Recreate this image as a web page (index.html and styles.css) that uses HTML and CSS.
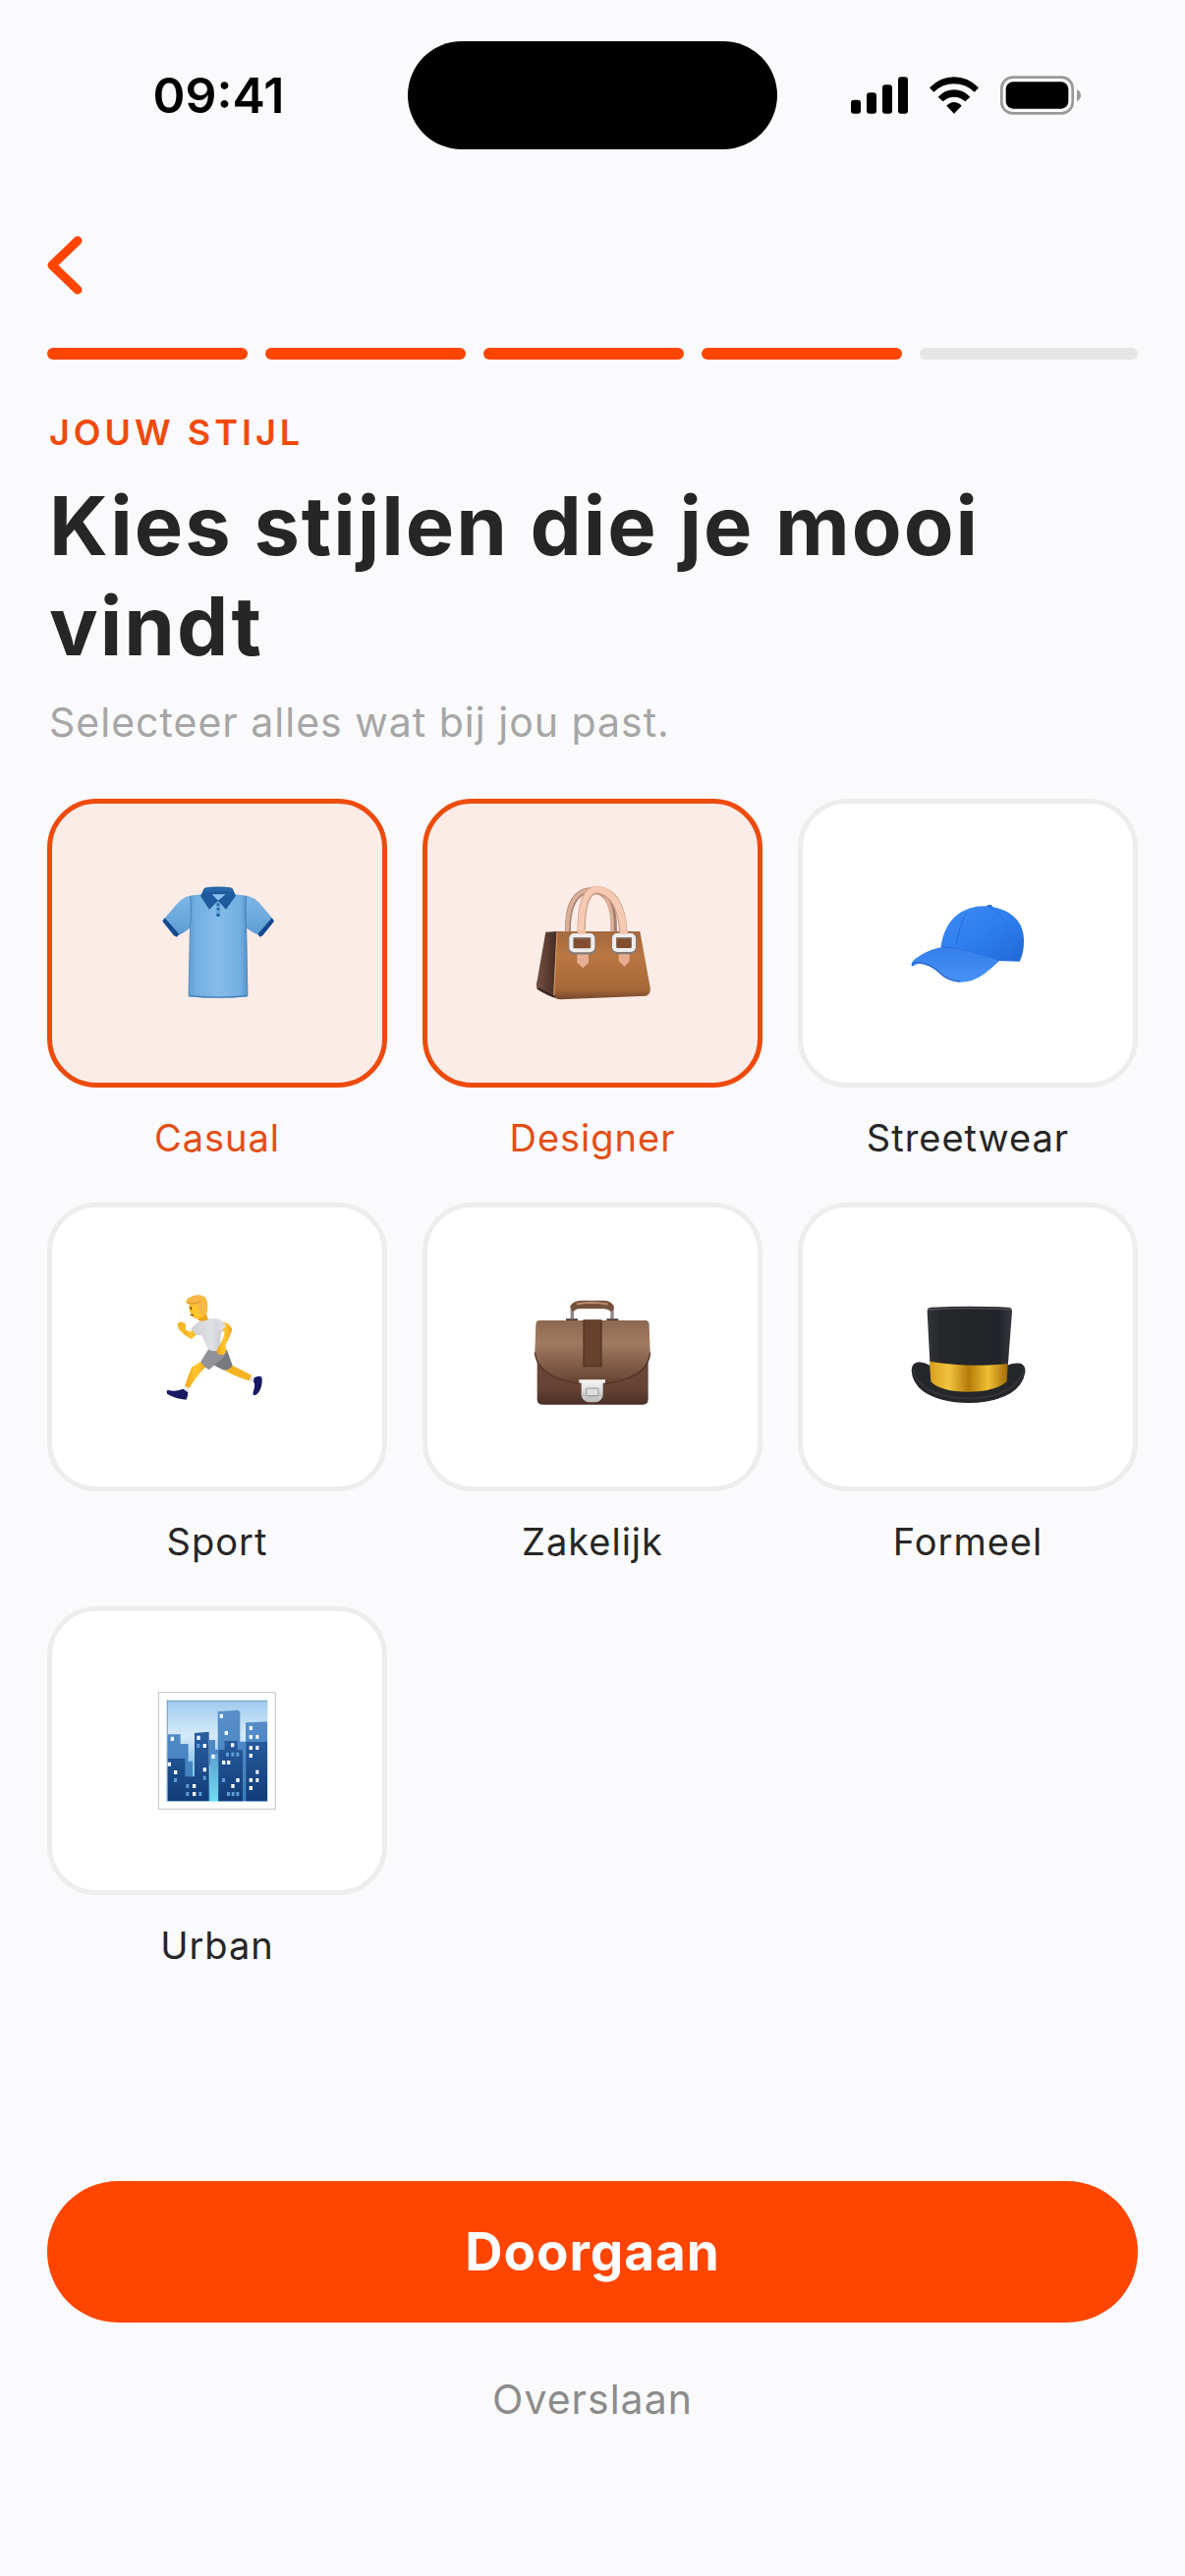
FILE: index.html
```html
<!DOCTYPE html>
<html lang="nl">
<head>
<meta charset="utf-8">
<meta name="viewport" content="width=device-width, initial-scale=1">
<title>Jouw stijl</title>
<link rel="stylesheet" href="styles.css">
</head>
<body>
<div class="screen">
  <header class="status-bar">
    <time class="status-time">09:41</time>
    <div class="island"></div>
    <div class="status-icons">
      <svg width="58" height="38" viewBox="75 85 174 114" aria-hidden="true">
        <rect x="75" y="156" width="30" height="42" rx="9"/>
        <rect x="123" y="134" width="30" height="64" rx="9"/>
        <rect x="171" y="110" width="30" height="88" rx="9"/>
        <rect x="219" y="86" width="30" height="112" rx="9"/>
      </svg>
      <svg width="50" height="38" viewBox="317 85 150 114" aria-hidden="true">
        <path d="M317 119Q349 86 392 86Q435 86 467 119L454 132Q427 107 392 107Q357 107 330 132Z"/>
        <path d="M343 147Q364 125 392 125Q420 125 441 147L426 161Q412 147 392 147Q372 147 358 161Z"/>
        <path d="M369 174Q379 163 392 163Q405 163 415 174L392 198Z"/>
      </svg>
      <svg width="82" height="40" viewBox="534 82 246 120" aria-hidden="true">
        <rect x="538" y="87" width="217" height="110" rx="34" fill="none" stroke="#999" stroke-width="8"/>
        <rect x="551" y="101" width="191" height="82" rx="22"/>
        <path d="M768 124Q780 130 780 142Q780 154 768 160Z" fill="#999"/>
      </svg>
    </div>
  </header>

  <main class="content">
    <button class="back" type="button" aria-label="Terug">
      <svg width="36" height="60" viewBox="0 0 36 60" aria-hidden="true">
        <path d="M31 5L5 30L31 55" fill="none" stroke="currentColor" stroke-width="9" stroke-linecap="round" stroke-linejoin="round"/>
      </svg>
    </button>

    <div class="progress" role="progressbar" aria-label="Voortgang" aria-valuemin="0" aria-valuemax="5" aria-valuenow="4">
      <span class="step done"></span><span class="step done"></span><span class="step done"></span><span class="step done"></span><span class="step"></span>
    </div>

    <div class="intro">
      <p class="eyebrow">JOUW STIJL</p>
      <h1 class="title">Kies stijlen die je mooi vindt</h1>
      <p class="subtitle">Selecteer alles wat bij jou past.</p>
    </div>

    <div class="styles">
      <label class="style">
        <input class="style-input" type="checkbox" name="style" value="casual" checked>
        <span class="card">
          <svg class="icon" viewBox="60 60 360 360" aria-hidden="true">
            <defs>
              <linearGradient id="shirt" x1="0" x2="1"><stop offset="0" stop-color="#5f9fd4"/><stop offset=".12" stop-color="#72aee0"/><stop offset=".5" stop-color="#85bdea"/><stop offset=".88" stop-color="#72aee0"/><stop offset="1" stop-color="#5592ca"/></linearGradient>
              <linearGradient id="sleeve" x1="0" y1="0" x2="0" y2="1"><stop offset="0" stop-color="#7db7e7"/><stop offset="1" stop-color="#5e9dd3"/></linearGradient>
            </defs>
            <path d="M158 95Q138 98 122 115L76 168L119 216Q133 214 158 193ZM328 95Q350 98 367 115L412 168L371 216Q352 212 328 193Z" fill="url(#sleeve)"/>
            <path d="M156 95L198 90H286L330 95V200L333 403Q243 412 153 403L157 200Z" fill="url(#shirt)"/>
            <path d="M153 401Q243 410 333 401" fill="none" stroke="#3f7fb9" stroke-width="4"/>
            <path d="M158 96Q163 125 157 200L153 400M329 96Q323 125 329 200L333 400" fill="none" stroke="#3975ad" stroke-width="2"/>
            <path d="M80 163L124 212L117 221L108 217L73 173ZM407 163L364 212L370 221L379 217L414 173Z" fill="#14498f"/>
            <path d="M222 88L243 108L266 88Z" fill="#8cc3ee"/>
            <path d="M236 106H250V160H236Z" fill="#69a7dc"/>
            <path d="M201 71Q243 64 286 71L297 95L267 137L243 110L216 137L189 96ZM224 91L243 110L266 91Z" fill="#1e5b9d" fill-rule="evenodd"/>
            <path d="M203 72Q243 66 284 72L290 85Q243 77 197 85Z" fill="#2768ab"/>
            <circle cx="243" cy="122" r="4" fill="#23619f"/><circle cx="243" cy="136" r="4" fill="#23619f"/><circle cx="243" cy="154" r="5" fill="#23619f"/>
          </svg>
        </span>
        <span class="name">Casual</span>
      </label>

      <label class="style">
        <input class="style-input" type="checkbox" name="style" value="designer" checked>
        <span class="card">
          <svg class="icon" viewBox="99 120 360 360" aria-hidden="true">
            <defs>
              <linearGradient id="bag" x1="0" y1="0" x2="0" y2="1"><stop offset="0" stop-color="#a4693f"/><stop offset=".35" stop-color="#b87642"/><stop offset=".85" stop-color="#a76938"/><stop offset="1" stop-color="#73452b"/></linearGradient>
              <linearGradient id="bag-side" x1="0" x2="1"><stop offset="0" stop-color="#765040"/><stop offset="1" stop-color="#422a24"/></linearGradient>
            </defs>
            <path d="M204 266Q201 142 276 138Q348 140 345 266" fill="none" stroke="#a98170" stroke-width="18"/>
            <path d="M202 266Q200 142 276 136Q343 140 339 266" fill="none" stroke="#dbb09a" stroke-width="11"/>
            <path d="M136 266L172 264V469Q140 461 110 441Q105 430 110 414Z" fill="url(#bag-side)"/>
            <path d="M169 264H424L454 430Q460 454 443 461L181 472Q164 471 160 459Z" fill="url(#bag)"/>
            <path d="M171 268L161 459" stroke="#d39c68" stroke-width="3"/>
            <path d="M113 438L163 464" fill="none" stroke="#342321" stroke-width="5"/>
            <path d="M245 272Q243 138 292 138Q368 145 373 272" fill="none" stroke="#c99a82" stroke-width="25"/>
            <path d="M244 272Q243 138 292 135Q368 145 374 272" fill="none" stroke="#f6c9b2" stroke-width="20"/>
            <path d="M232 300H267V360L250 376L232 360ZM359 300H392V355L377 371L359 355Z" fill="#e8ae92"/>
            <rect x="214" y="278" width="66" height="48" rx="9" fill="#824d2c" stroke="#857a74" stroke-width="17"/>
            <rect x="214" y="276" width="66" height="46" rx="9" fill="none" stroke="#eeeceb" stroke-width="12"/>
            <rect x="345" y="278" width="60" height="47" rx="9" fill="#824d2c" stroke="#857a74" stroke-width="17"/>
            <rect x="345" y="276" width="60" height="45" rx="9" fill="none" stroke="#eeeceb" stroke-width="12"/>
            <path d="M234 259H258V272H234ZM364 259H387V272H364Z" fill="#f3c1a8"/>
          </svg>
        </span>
        <span class="name">Designer</span>
      </label>

      <label class="style">
        <input class="style-input" type="checkbox" name="style" value="streetwear">
        <span class="card">
          <svg class="icon" viewBox="75 60 360 360" aria-hidden="true">
            <defs>
              <linearGradient id="cap" x1="0" y1="0" x2="1" y2="1"><stop offset="0" stop-color="#3f8cf2"/><stop offset=".5" stop-color="#2e7ef0"/><stop offset="1" stop-color="#2168d4"/></linearGradient>
              <linearGradient id="brim" x1="0" y1="0" x2="0" y2="1"><stop offset="0" stop-color="#347fe9"/><stop offset="1" stop-color="#4791f6"/></linearGradient>
            </defs>
            <path d="M311 130Q313 122 323 123Q332 124 331 132Z" fill="#2464ca"/>
            <path d="M172 254Q181 188 220 155Q260 125 310 127Q376 132 407 171Q428 200 426 237Q426 270 413 296L345 294Z" fill="url(#cap)"/>
            <path d="M251 146Q229 190 220 244" fill="none" stroke="#246bd8" stroke-width="3"/>
            <path d="M314 128Q363 145 381 202Q393 247 377 294" fill="none" stroke="#2a74e4" stroke-width="3"/>
            <path d="M86 311Q76 297 104 281Q135 258 182 251Q264 260 352 293Q330 315 303 335Q269 360 230 359Q193 355 171 334Q138 303 103 302Z" fill="url(#brim)"/>
            <path d="M86 309Q80 299 102 299Q140 301 171 332Q195 355 230 357" fill="none" stroke="#2a67c8" stroke-width="4"/>
            <path d="M176 251Q262 258 350 292" fill="none" stroke="#2a70dc" stroke-width="3"/>
          </svg>
        </span>
        <span class="name">Streetwear</span>
      </label>

      <label class="style">
        <input class="style-input" type="checkbox" name="style" value="sport">
        <span class="card">
          <svg class="icon" viewBox="63 63 360 360" aria-hidden="true">
            <defs>
              <linearGradient id="tee" x1="0" x2="1"><stop offset="0" stop-color="#cfd0d4"/><stop offset=".6" stop-color="#e0e1e4"/><stop offset="1" stop-color="#c3c5ca"/></linearGradient>
              <linearGradient id="skin" x1="0" x2="1"><stop offset="0" stop-color="#f0a51c"/><stop offset=".5" stop-color="#ffc72e"/><stop offset="1" stop-color="#f0a31c"/></linearGradient>
            </defs>
            <path d="M268 309L290 300Q320 314 349 330L345 347Q304 337 268 316Z" fill="#f5b323"/>
            <path d="M345 333L362 342L357 355L341 346Z" fill="#e6e7ee"/>
            <path d="M356 337Q371 329 379 335Q383 350 375 372Q367 389 357 391Q349 389 355 374Q360 358 354 348Z" fill="#171a62"/>
            <path d="M226 264L273 252L290 300Q280 314 264 314L235 300Z" fill="#77797e"/>
            <path d="M202 282L165 305Q154 330 144 364L158 370Q172 343 202 310L214 300Z" fill="url(#skin)"/>
            <path d="M143 362L160 369L154 383L138 374Z" fill="#e8e9f0"/>
            <path d="M91 374Q108 379 124 376L139 371L154 382Q153 398 148 404Q117 402 91 387Q87 380 91 374Z" fill="#171a62"/>
            <path d="M217 249L272 251Q270 272 244 290L218 313Q200 301 193 287Z" fill="#909297"/>
            <path d="M138 202L164 220L189 196L180 182L158 197L145 189Z" fill="url(#skin)"/>
            <path d="M132 196Q118 180 123 171Q130 162 137 168Q148 169 147 180Q149 196 139 200Z" fill="#f7b82a"/>
            <path d="M163 188Q184 161 207 158Q233 153 251 159L269 184L254 204L252 250Q233 262 215 250Q202 218 195 208L179 207Z" fill="url(#tee)"/>
            <path d="M262 166Q284 174 289 190Q282 214 268 238Q275 259 262 266Q245 270 241 257L245 245Q257 232 266 199L256 187Z" fill="url(#skin)"/>
            <path d="M239 159Q263 160 270 180L257 193L246 187" fill="#dcdee2"/>
            <path d="M177 148L209 141L216 158Q201 168 186 162Z" fill="#eba51f"/>
            <path d="M158 110Q154 128 162 141Q168 158 184 157Q204 153 211 135L207 107Z" fill="#ffc52e"/>
            <path d="M149 109Q145 97 158 92Q183 77 205 90Q218 100 212 140Q202 150 192 145Q188 127 184 117Q163 120 149 109Z" fill="#f6b943"/>
            <path d="M151 108Q176 114 194 104" fill="none" stroke="#dc9630" stroke-width="3"/>
            <path d="M162 121L164 128M163 145L170 146" fill="none" stroke="#673f1c" stroke-width="4" stroke-linecap="round"/>
          </svg>
        </span>
        <span class="name">Sport</span>
      </label>

      <label class="style">
        <input class="style-input" type="checkbox" name="style" value="zakelijk">
        <span class="card">
          <svg class="icon" viewBox="69 33 360 360" aria-hidden="true">
            <defs>
              <linearGradient id="case" x1="0" y1="0" x2="0" y2="1"><stop offset="0" stop-color="#6d4a39"/><stop offset=".7" stop-color="#664334"/><stop offset="1" stop-color="#4a2f26"/></linearGradient>
              <linearGradient id="flap" x1="0" y1="0" x2="0" y2="1"><stop offset="0" stop-color="#8c6850"/><stop offset=".35" stop-color="#a07b62"/><stop offset="1" stop-color="#644130"/></linearGradient>
              <linearGradient id="lock" x1="0" y1="0" x2="0" y2="1"><stop offset="0" stop-color="#f6f6f6"/><stop offset="1" stop-color="#bcbcbe"/></linearGradient>
            </defs>
            <path d="M187 126V104Q184 92 200 91M309 126V104Q311 92 298 91" fill="none" stroke="#8f8783" stroke-width="10"/>
            <path d="M191 105Q180 98 181 88Q191 72 213 71H285Q305 72 314 88Q317 100 306 105Q298 97 284 96H212Q198 96 191 105Z" fill="#76503b"/>
            <path d="M201 82Q245 73 296 82" fill="none" stroke="#b18a70" stroke-width="7"/>
            <path d="M168 127H204V136H168ZM292 127H328V136H292Z" fill="#4d352c"/>
            <path d="M80 220H419V373Q419 389 403 389H96Q80 389 80 373Z" fill="url(#case)"/>
            <path d="M88 132H411Q421 132 422 144L425 229Q421 291 341 314Q250 341 157 314Q80 291 73 229L76 144Q77 132 88 132Z" fill="url(#flap)"/>
            <path d="M73 230Q80 290 157 314Q250 341 341 314Q420 291 425 230" fill="none" stroke="#543328" stroke-width="4"/>
            <path d="M83 144L81 229Q94 281 163 304M414 144L417 229Q404 282 337 304" fill="none" stroke="#b0907b" stroke-width="1" stroke-dasharray="3 3"/>
            <path d="M220 130H278V274H220Z" fill="#553425"/>
            <path d="M224 130H274V270H224Z" fill="#65412e"/>
            <path d="M208 313H288V323H281V360Q277 381 258 382H237Q219 380 215 360V323H208Z" fill="url(#lock)"/>
            <rect x="230" y="339" width="37" height="23" rx="3" fill="#dedede" stroke="#99999b" stroke-width="3"/>
            <path d="M216 359Q249 369 281 359" fill="none" stroke="#a4a4a5" stroke-width="2"/>
          </svg>
        </span>
        <span class="name">Zakelijk</span>
      </label>

      <label class="style">
        <input class="style-input" type="checkbox" name="style" value="formeel">
        <span class="card">
          <svg class="icon" viewBox="75 33 360 360" aria-hidden="true">
            <defs>
              <linearGradient id="hat" x1="0" x2="1"><stop offset="0" stop-color="#34353a"/><stop offset=".15" stop-color="#25272b"/><stop offset=".85" stop-color="#222429"/><stop offset="1" stop-color="#37383d"/></linearGradient>
              <linearGradient id="band" x1="0" x2="1"><stop offset="0" stop-color="#d79e1b"/><stop offset=".25" stop-color="#f0c440"/><stop offset=".5" stop-color="#b47a09"/><stop offset=".75" stop-color="#efc033"/><stop offset="1" stop-color="#a36b06"/></linearGradient>
            </defs>
            <path d="M83 284Q84 260 107 259Q126 261 140 270H373Q390 260 416 263Q432 269 430 291Q424 329 386 354Q334 384 257 384Q170 384 119 349Q84 321 83 284Z" fill="#26272b"/>
            <path d="M88 284Q98 324 140 346Q196 373 270 370Q349 367 394 331Q419 309 427 284" fill="none" stroke="#38393e" stroke-width="4"/>
            <path d="M131 104Q131 92 144 92Q260 87 378 92Q391 93 390 105L374 315Q354 350 257 350Q163 350 142 316Z" fill="url(#hat)"/>
            <path d="M133 99Q260 91 388 99" fill="none" stroke="#515258" stroke-width="4"/>
            <path d="M138 257Q258 277 377 264L374 319Q338 350 257 350Q171 350 142 319Z" fill="url(#band)"/>
          </svg>
        </span>
        <span class="name">Formeel</span>
      </label>

      <label class="style">
        <input class="style-input" type="checkbox" name="style" value="urban">
        <span class="card">
          <svg class="icon" viewBox="63 66 360 360" aria-hidden="true">
            <defs>
              <linearGradient id="sky" x1="0" y1="0" x2="0" y2="1"><stop offset="0" stop-color="#9dcbed"/><stop offset=".35" stop-color="#d6ebfa"/><stop offset=".65" stop-color="#8bc4e8"/><stop offset="1" stop-color="#57c8e8"/></linearGradient>
              <linearGradient id="tower" x1="0" y1="0" x2="0" y2="1"><stop offset="0" stop-color="#2a5fa2"/><stop offset="1" stop-color="#123c78"/></linearGradient>
              <linearGradient id="far" x1="0" y1="0" x2="0" y2="1"><stop offset="0" stop-color="#5a8fcb"/><stop offset="1" stop-color="#397ebc"/></linearGradient>
              <linearGradient id="gap" x1="0" y1="0" x2="0" y2="1"><stop offset="0" stop-color="#5d9fd0"/><stop offset="1" stop-color="#6fdcf0"/></linearGradient>
            </defs>
            <rect x="64" y="68" width="357" height="356" fill="#fff" stroke="#c3c3c3" stroke-width="3"/>
            <rect x="89" y="92" width="308" height="308" fill="url(#sky)"/>
            <path d="M91 196H131V225H155V278H168V330H91ZM219 213H237V242H245V126L306 122L313 126V218H330V160L396 157V400H247V290H219Z" fill="url(#far)"/>
            <path d="M91 270H145V325H174V192L218 188V400H91ZM247 243H266V216H305V244H321V400H247ZM331 219H396V400H331Z" fill="url(#tower)"/>
            <path d="M222 255H246V400H222Z" fill="url(#gap)"/>
            <path d="M91 94H396M91 92V398" stroke="#7aa3b5" stroke-width="3"/>
            <path d="M101 203h10v13h-10zM181 200h10v13h-10zM200 225h10v12h-10zM251 134h10v12h-10zM266 186h10v12h-10zM285 223h10v12h-10zM226 258h10v12h-10zM92 281h10v12h-10zM111 306h10v12h-10zM200 298h10v12h-10zM168 348h10v12h-10zM168 372h10v12h-10zM258 276h10v12h-10zM273 276h10v12h-10zM301 330h10v12h-10zM286 348h10v12h-10zM341 171h10v12h-10zM341 198h10v12h-10zM361 198h9v12h-9zM341 231h10v12h-10zM361 231h9v12h-9zM341 255h10v12h-10zM361 305h9v12h-9zM361 330h9v12h-9zM341 330h10v12h-10zM341 354h10v12h-10z" fill="#f3fbff"/>
            <path d="M181 225h9v12h-9zM200 323h9v12h-9zM148 348h9v12h-9zM148 372h9v12h-9zM187 372h9v12h-9zM111 330h9v12h-9zM258 330h9v12h-9zM270 251h9v12h-9zM286 251h9v12h-9zM301 251h9v12h-9zM273 372h9v12h-9zM287 372h9v12h-9zM301 372h9v12h-9z" fill="#5b9dd7"/>
          </svg>
        </span>
        <span class="name">Urban</span>
      </label>
    </div>
  </main>

  <footer class="actions">
    <button class="primary" type="button">Doorgaan</button>
    <button class="skip" type="button">Overslaan</button>
  </footer>
</div>
</body>
</html>
```
FILE: styles.css
```css
* {
  box-sizing: border-box;
}

body {
  margin: 0;
  background: #fafafc;
  color: #262626;
  font-family: Inter, "Liberation Sans", sans-serif;
}

button {
  padding: 0;
  border: 0;
  background: none;
  font: inherit;
  letter-spacing: inherit;
  cursor: pointer;
}

svg {
  display: block;
  overflow: visible;
}

.screen {
  display: flex;
  flex-direction: column;
  min-height: 100vh;
}

.status-bar {
  display: grid;
  grid-template-columns: 1fr 376px 1fr;
  align-items: center;
  padding-top: 42px;
  color: #000;
}

.status-time {
  padding-left: 30px;
  font-size: 50px;
  font-weight: 600;
  line-height: 60px;
  text-align: center;
}

.island {
  height: 110px;
  border-radius: 55px;
  background: #000;
}

.status-icons {
  display: flex;
  align-items: center;
  justify-content: center;
  gap: 22px;
  padding-right: 32px;
}

.content {
  display: flex;
  flex-direction: column;
  padding: 88px 48px 0;
}

.back {
  align-self: flex-start;
  color: #ff4500;
}

.progress {
  display: grid;
  grid-template-columns: repeat(5, 1fr);
  margin-top: 54px;
}

.step {
  height: 12px;
  margin-right: 18px;
  border-radius: 6px;
  background: #e6e6e6;
}

.step:last-child {
  margin-right: 0;
}

.step.done {
  background: #ff4500;
}

.intro {
  padding: 50px 2px 0;
}

.eyebrow {
  margin: 0;
  color: #f04a0c;
  font-size: 36px;
  font-weight: 600;
  line-height: 48px;
  letter-spacing: 4px;
}

.title {
  margin: 20px 0 0;
  font-size: 83px;
  font-weight: 700;
  line-height: 102px;
  letter-spacing: 2px;
}

.subtitle {
  margin: 19px 0 0;
  color: #a6a6a6;
  font-size: 41px;
  line-height: 56px;
  letter-spacing: 1px;
}

.styles {
  display: grid;
  grid-template-columns: repeat(3, 1fr);
  gap: 40px 36px;
  margin-top: 50px;
}

.style {
  position: relative;
  display: flex;
  flex-direction: column;
  gap: 25px;
  text-align: center;
  cursor: pointer;
}

.style-input {
  position: absolute;
  inset: 0;
  margin: 0;
  opacity: 0;
}

.card {
  display: flex;
  align-items: center;
  justify-content: center;
  height: 294px;
  border: 5px solid #ededed;
  border-radius: 50px;
  background: #fff;
}

.icon {
  width: 120px;
  height: 120px;
}

.name {
  font-size: 38px;
  line-height: 52px;
  letter-spacing: 1px;
}

.style-input:checked + .card {
  border-color: #ed4b0d;
  background: #fcece7;
}

.style-input:checked ~ .name {
  color: #e34e17;
}

.style-input:focus-visible + .card {
  outline: 4px solid #262626;
}

.actions {
  display: flex;
  flex-direction: column;
  gap: 50px;
  margin-top: auto;
  padding: 48px 48px 152px;
}

.primary {
  height: 144px;
  border-radius: 72px;
  background: #ff4500;
  color: #fff;
  font-size: 53px;
  font-weight: 700;
  letter-spacing: 1px;
}

.skip {
  color: #8c8c8c;
  font-size: 41px;
  line-height: 56px;
  letter-spacing: 1px;
}
```
